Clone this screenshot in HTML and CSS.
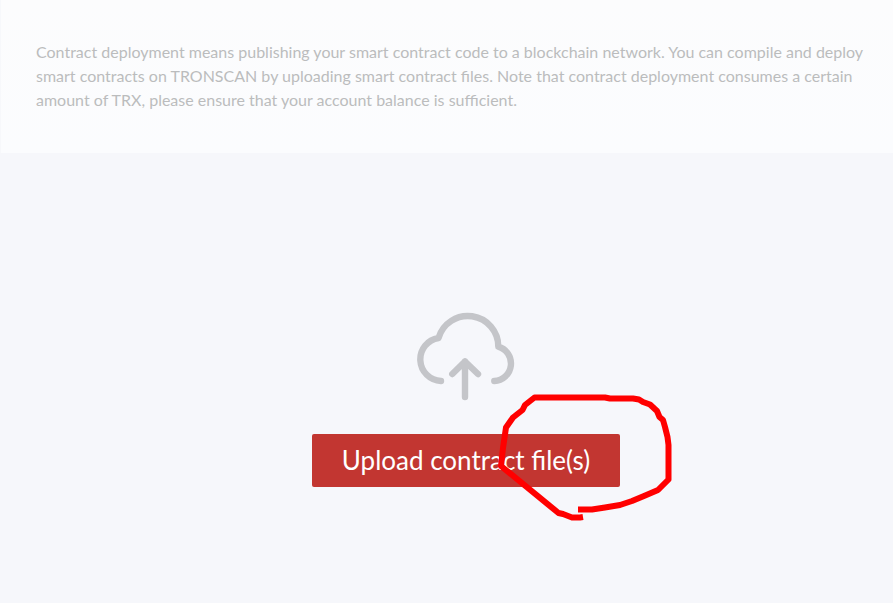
FILE: index.html
```html
<!DOCTYPE html>
<html lang="en">
<head>
<meta charset="utf-8">
<title>Contract deployment</title>
<link rel="stylesheet" href="styles.css">
</head>
<body>
<header class="intro">
  <p class="intro-text">Contract deployment means publishing your smart contract code to a blockchain network. You can compile and deploy smart contracts on TRONSCAN by uploading smart contract files. Note that contract deployment consumes a certain amount of TRX, please ensure that your account balance is sufficient.</p>
</header>
<main class="upload">
  <svg class="cloud" width="98" height="88" viewBox="0 0 98 88" aria-hidden="true">
    <path d="M24 68A21.650 21.650 0 0 1 21.500 25A30.500 30.500 0 0 1 81.300 33.700A17.500 17.500 0 0 1 77.300 68"/>
    <path d="M48 84V48.500M35.300 61L48 48.500L61 61"/>
  </svg>
  <div class="action">
    <button class="upload-button" type="button">Upload contract file(s)</button>
    <svg class="marker" width="190" height="140" viewBox="0 0 190 140" aria-hidden="true">
      <path d="M88 124.500H102L115 122.500L130 120L142 116L154 111L168 105L178.500 94.500V60L177.500 52L175 42L173 35L169.500 32L167 26L160 19.500L153 17L149 14.500L143 13.500H120L115 12.500H44.500L35 20L32.500 25L23 32.500L16 42.500L13 63L11 81L68.500 128L73 129L82 132.500H90L93 132"/>
    </svg>
  </div>
</main>
</body>
</html>
```
FILE: styles.css
```css
* {
  box-sizing: border-box;
}

body {
  margin: 0;
  min-height: 100vh;
  display: flex;
  flex-direction: column;
  background: #f6f7fb;
  font-family: Lato, "Liberation Sans", sans-serif;
}

.intro {
  padding: 40px 24px 41px 35px;
  border-left: 1px solid #f7f8fb;
  background: linear-gradient(#fcfcfd, #fbfcfe);
}

.intro-text {
  margin: 0;
  color: #bbbcbd;
  font-size: 16px;
  line-height: 24px;
}

.upload {
  flex: 1;
  display: flex;
  flex-direction: column;
  align-items: center;
  gap: 33px;
  padding: 160px 0 40px 39px;
}

.cloud {
  overflow: visible;
  fill: none;
  stroke: #c4c5c9;
  stroke-width: 6.4;
  stroke-linecap: round;
  stroke-linejoin: round;
}

.action {
  position: relative;
}

.upload-button {
  display: block;
  padding: 8px 30px;
  border: 0;
  border-radius: 2px;
  background: #c23631;
  color: #fff;
  font-family: inherit;
  font-size: 26px;
  line-height: 37px;
  white-space: nowrap;
  cursor: pointer;
}

.marker {
  position: absolute;
  top: -49px;
  left: 178px;
  fill: none;
  stroke: #f00;
  stroke-width: 6;
  stroke-linejoin: round;
  pointer-events: none;
}
```
